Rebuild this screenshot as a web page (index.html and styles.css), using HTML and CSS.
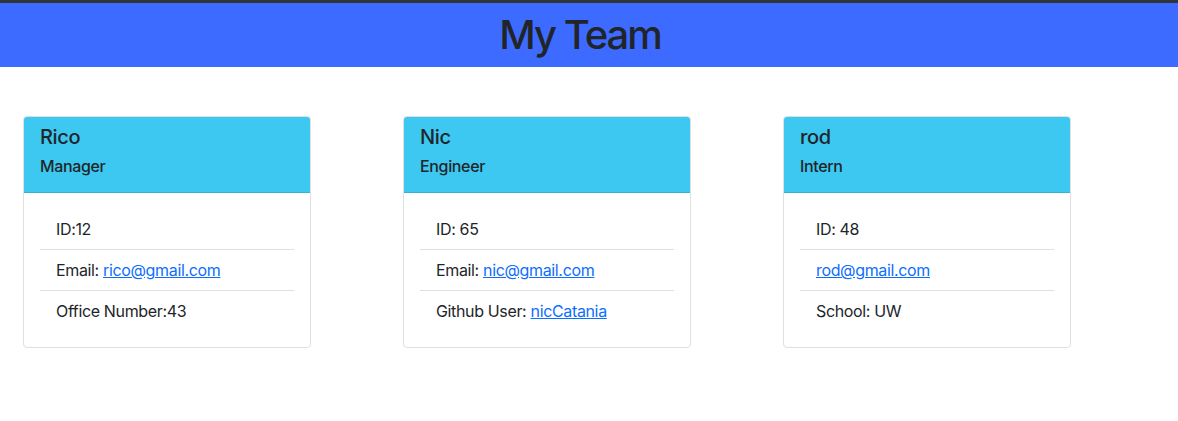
FILE: index.html
```html
<!DOCTYPE html>
<html lang="en">
<head>
<meta charset="utf-8">
<title>My Team</title>
<link rel="stylesheet" href="styles.css">
</head>
<body>
<header class="topbar">
  <h1 class="title">My Team</h1>
</header>
<main class="team">
  <div class="card">
    <div class="card-header">
      <h5 class="name">Rico</h5>
      <h6 class="role">Manager</h6>
    </div>
    <div class="card-body">
      <ul class="list">
        <li class="item">ID:12</li>
        <li class="item">Email: <a href="#">rico@gmail.com</a></li>
        <li class="item">Office Number:43</li>
      </ul>
    </div>
  </div>
  <div class="card">
    <div class="card-header">
      <h5 class="name">Nic</h5>
      <h6 class="role">Engineer</h6>
    </div>
    <div class="card-body">
      <ul class="list">
        <li class="item">ID: 65</li>
        <li class="item">Email: <a href="#">nic@gmail.com</a></li>
        <li class="item">Github User: <a href="#">nicCatania</a></li>
      </ul>
    </div>
  </div>
  <div class="card">
    <div class="card-header">
      <h5 class="name">rod</h5>
      <h6 class="role">Intern</h6>
    </div>
    <div class="card-body">
      <ul class="list">
        <li class="item">ID: 48</li>
        <li class="item"><a href="#">rod@gmail.com</a></li>
        <li class="item">School: UW</li>
      </ul>
    </div>
  </div>
</main>
</body>
</html>
```
FILE: styles.css
```css
* { box-sizing: border-box; }
html, body { margin: 0; padding: 0; }
body {
  font-family: Inter, "Liberation Sans", Arial, sans-serif;
  font-size: 16px;
  line-height: 1.5;
  letter-spacing: -0.35px;
  color: #212529;
  background: #fff;
  border-top: 3px solid #333438;
}
.topbar {
  background: #3d6bff;
  padding: 8px 18px 8px 0;
  text-align: center;
}
.title {
  margin: 0;
  font-size: 40px;
  font-weight: 500;
  line-height: 1.2;
  letter-spacing: -2px;
  color: #212529;
}
.team {
  display: flex;
  gap: 92px;
  padding: 49px 0 0 23px;
}
.card {
  width: 288px;
  border: 1px solid #dfdfdf;
  border-radius: 4px;
  overflow: hidden;
}
.card-header {
  background: #3cc8f0;
  padding: 8px 16px;
  border-bottom: 1px solid #35b3d7;
}
.name {
  margin: 0 0 8px;
  font-size: 20px;
  font-weight: 500;
  line-height: 1.2;
}
.role {
  margin: 0 0 8px;
  font-size: 16px;
  font-weight: 500;
  line-height: 1.2;
}
.card-body { padding: 16px; }
.list { list-style: none; margin: 0; padding: 0; }
.item {
  padding: 8px 16px;
  border-bottom: 1px solid #dfdfdf;
}
.item:last-child { border-bottom: none; }
a { color: #0d6efd; text-decoration: underline; }
```
